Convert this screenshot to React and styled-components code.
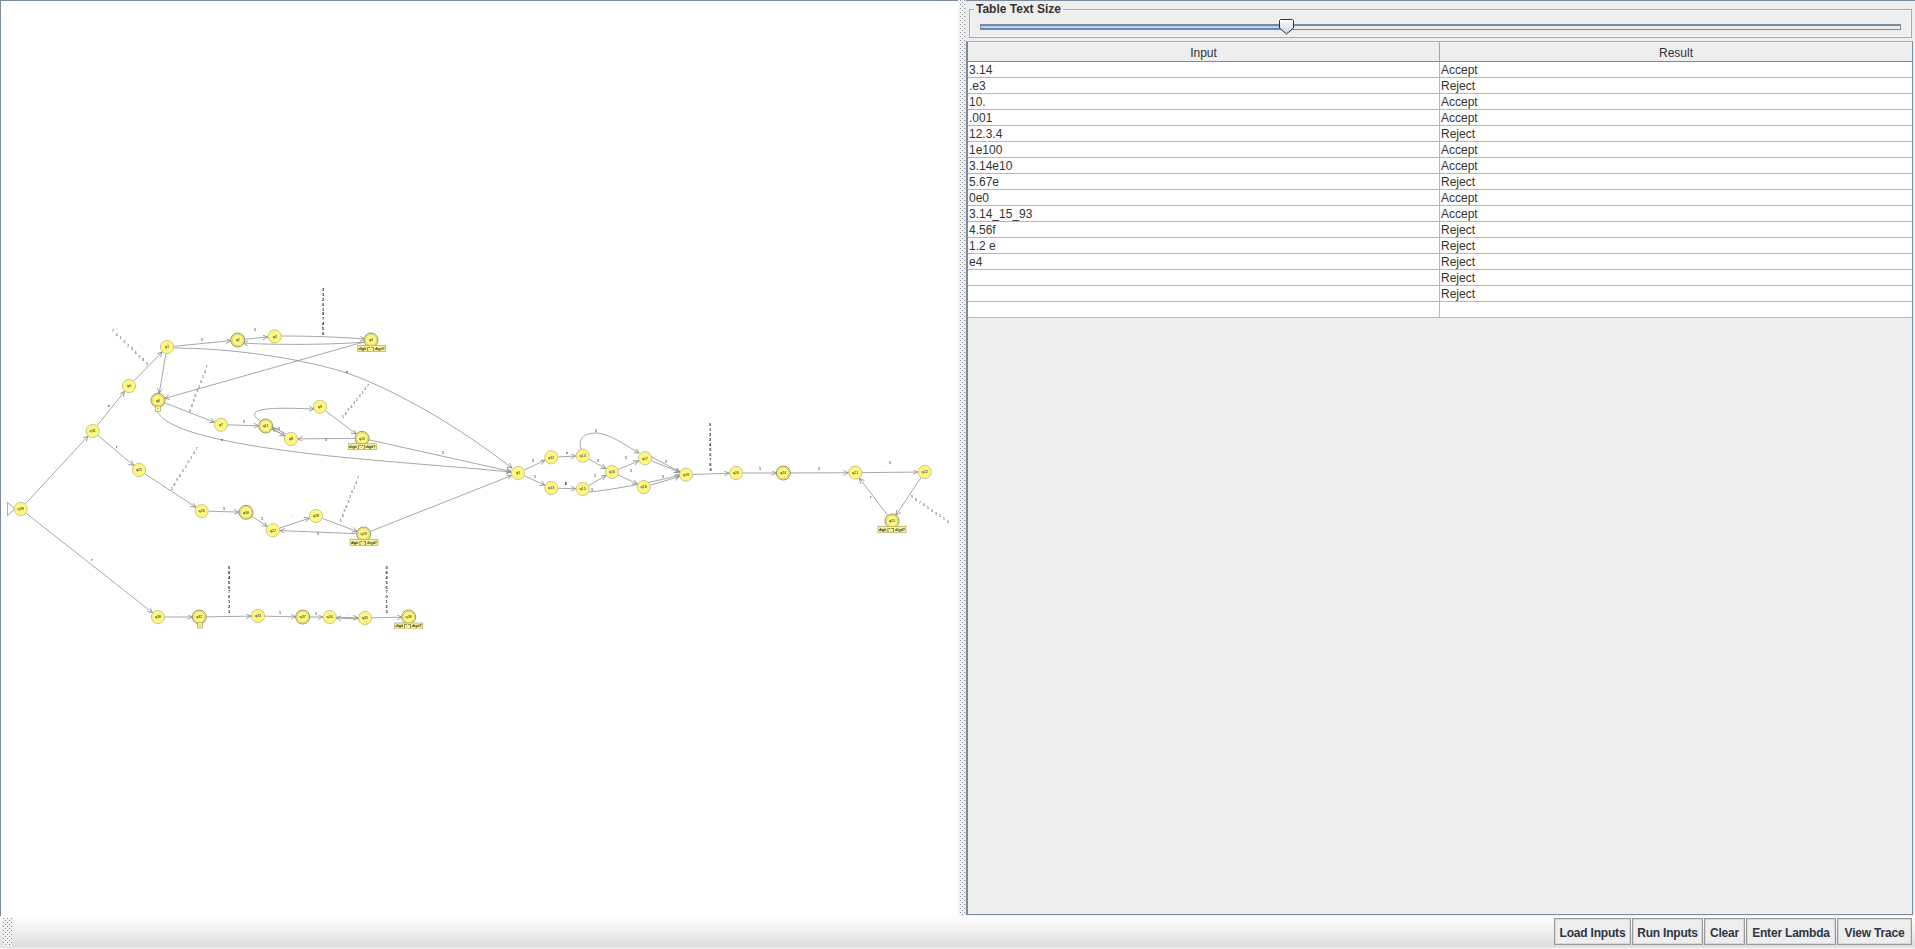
import React from 'react';
import styled, { createGlobalStyle } from 'styled-components';

const GlobalStyle = createGlobalStyle`
	html, body {
		margin: 0;
		height: 100%;
		overflow: hidden;
		background: #eeeeee;
		font-family: 'Liberation Sans', Arial, sans-serif;
	}
`;

const nodes = {
	q0: [129, 386], q1: [167, 347], q2: [237.7, 340, 1], q3: [274.7, 336.3], q4: [371, 340, 1],
	q5: [518, 473], q6: [158, 400.3, 1], q7: [221, 424.7], q8: [291, 439], q9: [320, 406.7],
	q10: [362, 438.3, 1], q11: [265.7, 426, 1], q12: [551.3, 457.3], q13: [551.3, 488],
	q14: [582.7, 455.7], q15: [582.7, 489], q16: [612, 472], q17: [645, 458.3], q18: [643.7, 487],
	q19: [686, 474.7], q20: [736, 473], q21: [855.3, 472.7], q22: [924.7, 472], q23: [892, 521, 1],
	q24: [783.3, 473, 1], q25: [139, 470], q26: [201.7, 511], q27: [273, 530.3], q28: [316, 516],
	q29: [363.7, 534, 1], q30: [246, 512.3, 1], q31: [92.7, 431], q32: [199.3, 617, 1], q33: [258, 616],
	q34: [329.7, 617], q35: [365, 618], q36: [408.7, 617, 1], q37: [302.7, 617, 1], q38: [158, 617],
	q39: [20.7, 509],
};

const edges = [
	['q39', 'q31'], ['q31', 'q0'], ['q0', 'q1'], ['q1', 'q2'], ['q2', 'q3'], ['q1', 'q6'],
	['q4', 'q6'], ['q6', 'q7'], ['q7', 'q11'], ['q11', 'q8'], ['q9', 'q10'], ['q10', 'q8'],
	['q10', 'q5'], ['q31', 'q25'], ['q25', 'q26'], ['q26', 'q30'], ['q30', 'q27'], ['q27', 'q28'],
	['q28', 'q29'], ['q29', 'q27'], ['q29', 'q5'], ['q39', 'q38'], ['q38', 'q32'], ['q32', 'q33'],
	['q33', 'q37'], ['q37', 'q34'], ['q34', 'q35'], ['q35', 'q36'], ['q5', 'q12'], ['q5', 'q13'],
	['q12', 'q14'], ['q13', 'q15'], ['q14', 'q16'], ['q15', 'q16'], ['q16', 'q17'], ['q16', 'q18'],
	['q17', 'q19'], ['q18', 'q19'], ['q19', 'q20'], ['q20', 'q24'], ['q24', 'q21'], ['q21', 'q22'],
	['q22', 'q23'], ['q23', 'q21'],
];

const curves = [
	'M173 348 C230 348 300 358 347 373 C400 392 460 428 512 468',
	'M156 407 C158 432 240 446 330 456 C400 463 460 467 511 472',
	'M286 434 C270 425 252 420 255 413 C258 407 290 408 314 409',
	'M581 449 C578 437 585 433 597 433 C610 434 625 445 639 453',
	'M589 492 C610 490 650 483 680 475',
	'M281 336 C310 336 340 337 365 339',
	'M365 342 C330 345 270 345 243 343',
	'M285 436 L272 428',
	'M359 619 L336 618',
	'M648 455 L680 472',
];

const edgeLabels = [
	[55, 468, '.'], [109, 407, 'e'], [146, 366, '_'], [202, 341, '1'], [255, 331, '1'], [240, 347, '.'],
	[167, 374, '.'], [266, 374, '.'], [347, 373, 'e'], [190, 411, '_'], [244, 423, '1'], [279, 430, '1'],
	[302, 418, '.'], [326, 441, '1'], [222, 441, 'e'], [117, 448, 'r'], [172, 489, '_'], [224, 510, '1'],
	[262, 520, '1'], [293, 516, '.'], [318, 535, '1'], [92, 561, 'r'], [178, 614, '.'], [280, 614, '1'],
	[316, 615, '1'], [348, 615, '.'], [533, 462, '1'], [535, 478, '1'], [567, 454, 'e'], [566, 485, 'E'],
	[598, 462, '1'], [595, 477, '1'], [592, 491, '1'], [596, 432, '1'], [626, 459, '1'], [631, 472, '1'],
	[666, 463, '1'], [663, 478, '1'], [760, 470, '1'], [819, 470, '1'], [890, 464, '1'], [871, 498, 'r'],
	[443, 454, '1'], [440, 500, '.'],
];

// little stacks of digit labels hanging off the looping transitions
const digitStacks = [
	{ from: [323, 291], to: [323, 335], chars: '3320187456', dark: true },
	{ from: [113, 332], to: [147, 365], chars: '7410236985' },
	{ from: [206.7, 368], to: [190, 412], chars: '7410236985' },
	{ from: [368, 387], to: [343, 418], chars: '7410236985' },
	{ from: [196.7, 450], to: [171.7, 490], chars: '7410236985' },
	{ from: [358, 479], to: [340.7, 522], chars: '7410236985' },
	{ from: [229, 569], to: [229, 613], chars: '9845670123', dark: true },
	{ from: [386.7, 569], to: [386.7, 613], chars: '9845670123', dark: true },
	{ from: [710, 426], to: [710.5, 471], chars: '0123456789', dark: true },
	{ from: [912, 498], to: [948, 523], chars: '9876543210' },
];

const acceptLabels = [[371.7, 348.3], [362.3, 446.7], [364, 542.3], [408.7, 626], [892, 529.3]];
const dotLabels = [[158, 408.7], [200, 625.3]];

const rows = [
	['3.14', 'Accept'], ['.e3', 'Reject'], ['10.', 'Accept'], ['.001', 'Accept'], ['12.3.4', 'Reject'],
	['1e100', 'Accept'], ['3.14e10', 'Accept'], ['5.67e', 'Reject'], ['0e0', 'Accept'],
	['3.14_15_93', 'Accept'], ['4.56f', 'Reject'], ['1.2 e', 'Reject'], ['e4', 'Reject'],
	['', 'Reject'], ['', 'Reject'], ['', ''],
];

const buttons = [
	{ label: 'Load Inputs', width: 77 },
	{ label: 'Run Inputs', width: 71 },
	{ label: 'Clear', width: 41 },
	{ label: 'Enter Lambda', width: 90 },
	{ label: 'View Trace', width: 75 },
];

function trimLine(a, b, r = 7) {
	const dx = b[0] - a[0];
	const dy = b[1] - a[1];
	const len = Math.hypot(dx, dy);
	const ux = dx / len;
	const uy = dy / len;
	return { x1: a[0] + ux * r, y1: a[1] + uy * r, x2: b[0] - ux * r, y2: b[1] - uy * r };
}

function Graph() {
	return (
		<GraphSvg width="958" height="916" viewBox="0 0 958 916">
			<defs>
				<marker id="arrow" markerWidth="6" markerHeight="6" refX="5" refY="2.5" orient="auto" markerUnits="userSpaceOnUse">
					<path d="M0 0 L5 2.5 L0 5" fill="none" stroke="#808080" strokeWidth="0.7" />
				</marker>
				<filter id="soft" x="0" y="0" width="100%" height="100%">
					<feGaussianBlur stdDeviation="0.22" />
				</filter>
			</defs>
			<g filter="url(#soft)">
				<path d="M7.3 502.3 L15 509 L7.3 515.7 Z" fill="#fff" stroke="#888" strokeWidth="0.8" />
				{edges.map(([a, b]) => (
					<line key={a + b} {...trimLine(nodes[a], nodes[b])} stroke="#909090" strokeWidth="0.8" markerEnd="url(#arrow)" />
				))}
				{curves.map(d => (
					<path key={d} d={d} fill="none" stroke="#909090" strokeWidth="0.8" markerEnd="url(#arrow)" />
				))}
				{edgeLabels.map(([x, y, t], i) => (
					<text key={i} x={x} y={y} fontSize="3.6" fontWeight="bold" fill="#333" textAnchor="middle">{t}</text>
				))}
				{digitStacks.map((stack, s) =>
					stack.chars.split('').map((c, i) => {
						const t = i / (stack.chars.length - 1);
						const x = stack.from[0] + (stack.to[0] - stack.from[0]) * t;
						const y = stack.from[1] + (stack.to[1] - stack.from[1]) * t;
						return (
							<text
								key={s + '-' + i}
								x={x}
								y={y}
								fontSize={stack.dark ? 4 : 3.4}
								fontWeight={stack.dark ? 'bold' : 'normal'}
								fill={stack.dark ? '#222' : '#333'}
								textAnchor="middle"
							>
								{c}
							</text>
						);
					})
				)}
				{Object.entries(nodes).map(([name, [x, y, final]]) => (
					<g key={name}>
						<circle cx={x} cy={y} r={final ? 7 : 6.6} fill="#fdf780" stroke={final ? '#8f8c50' : '#b5b27a'} strokeWidth={final ? 0.9 : 0.7} />
						{final && <circle cx={x} cy={y} r="5.6" fill="#fdf780" stroke="#b5b27a" strokeWidth="0.5" />}
						<text x={x} y={y + 1.3} fontSize="3.7" fill="#222" textAnchor="middle">{name}</text>
					</g>
				))}
				{acceptLabels.map(([x, y]) => (
					<g key={x}>
						<rect x={x - 14} y={y - 3} width="28" height="6" fill="#fdf79a" stroke="#a8a25c" strokeWidth="0.7" />
						<text x={x} y={y + 1.3} fontSize="3.6" fontWeight="bold" fill="#222" textAnchor="middle">digit [&quot;.&quot;] digit?</text>
					</g>
				))}
				{dotLabels.map(([x, y]) => (
					<g key={x}>
						<rect x={x - 2.6} y={y - 2.7} width="5.2" height="5.4" fill="#fdf79a" stroke="#a8a25c" strokeWidth="0.7" />
						<text x={x} y={y + 0.6} fontSize="4" fontWeight="bold" fill="#222" textAnchor="middle">..</text>
					</g>
				))}
			</g>
		</GraphSvg>
	);
}

function App() {
	return (
		<Page>
			<GlobalStyle />
			<Workspace>
				<GraphPanel>
					<Graph />
				</GraphPanel>
				<SplitHandle />
				<InputPanel>
					<SizeGroup>
						<SizeLegend>Table Text Size</SizeLegend>
						<SliderTrack>
							<SliderFill $width={300} />
							<SliderThumb width="16" height="16" viewBox="0 0 16 16">
								<defs>
									<linearGradient id="thumb" x1="0" y1="0" x2="0" y2="1">
										<stop offset="0" stopColor="#ffffff" />
										<stop offset="1" stopColor="#c4d4e4" />
									</linearGradient>
								</defs>
								<path d="M1.5 .5 H13.5 L14.5 1.5 V9 L7.5 15 L.5 9 V1.5 Z" fill="url(#thumb)" stroke="#333" />
							</SliderThumb>
						</SliderTrack>
					</SizeGroup>
					<TableFrame>
						<DataTable>
							<colgroup>
								<ColInput />
								<col />
							</colgroup>
							<thead>
								<tr>
									<HeadCell>Input</HeadCell>
									<HeadCell>Result</HeadCell>
								</tr>
							</thead>
							<tbody>
								{rows.map(([input, result], i) => (
									<tr key={i}>
										<Cell>{input}</Cell>
										<Cell>{result}</Cell>
									</tr>
								))}
							</tbody>
						</DataTable>
					</TableFrame>
				</InputPanel>
			</Workspace>
			<BottomBar>
				<BarGrip />
				<ButtonRow>
					{buttons.map(b => (
						<ActionButton key={b.label} $width={b.width}>{b.label}</ActionButton>
					))}
				</ButtonRow>
			</BottomBar>
		</Page>
	);
}

export default App;

const dots = `
	background-image:
		radial-gradient(circle at 0.5px 0.5px, #80868c 0.75px, transparent 0.8px),
		radial-gradient(circle at 0.5px 0.5px, #80868c 0.75px, transparent 0.8px);
	background-size: 4px 4px;
	background-position: 0 0, 2px 2px;
`;

const Page = styled.div`
	height: 100vh;
	display: flex;
	flex-direction: column;
`;

const Workspace = styled.div`
	flex: 1;
	min-height: 0;
	display: flex;
`;

const GraphPanel = styled.div`
	width: 958px;
	background: #ffffff;
	box-shadow: inset 1px 1px 0 #7a8a99;
	overflow: hidden;
`;

const GraphSvg = styled.svg`
	display: block;
`;

const SplitHandle = styled.div`
	width: 5px;
	padding: 0;
	border-left: 2px solid #f4f4f4;
	border-right: 1px solid #eeeeee;
	background-color: #f4f4f4;
	${dots}
`;

const InputPanel = styled.div`
	flex: 1;
	min-width: 0;
	display: flex;
	flex-direction: column;
	background: #eeeeee;
	box-shadow: inset 0 1px 0 #7a8a99;
`;

const SizeGroup = styled.fieldset`
	box-sizing: border-box;
	height: 36px;
	margin: 2px 3px 3px 3px;
	padding: 3px 10px 0 10px;
	border: 1px solid #a9a9a9;
	box-shadow: inset 0 0 0 1px #f6f6f6;
`;

const SizeLegend = styled.legend`
	margin-left: -6px;
	padding: 0 2px;
	font-size: 12px;
	font-weight: bold;
	line-height: 14px;
	color: #333333;
`;

const SliderTrack = styled.div`
	position: relative;
	height: 6px;
	margin-top: 5px;
	border: 1px solid #7a8a99;
	border-top-width: 2px;
	background: #eeeeee;
	box-sizing: border-box;
`;

const SliderFill = styled.div`
	box-sizing: border-box;
	width: ${p => p.$width}px;
	height: 100%;
	border-bottom: 1px solid #6382bf;
	background: linear-gradient(#a9c2e6, #d3e0f0);
`;

const SliderThumb = styled.svg`
	position: absolute;
	left: 298px;
	top: -7px;
`;

const TableFrame = styled.div`
	flex: 1;
	min-height: 0;
	margin: 0 2px 1px 0;
	border: 1px solid #7a8a99;
	border-top-color: #a9b2bb;
	border-left-width: 2px;
	background: #eeeeee;
`;

const DataTable = styled.table`
	width: 100%;
	table-layout: fixed;
	border-collapse: separate;
	border-spacing: 0;
	font-size: 12px;
	color: #333333;
`;

const ColInput = styled.col`
	width: 472px;
`;

const HeadCell = styled.th`
	box-sizing: border-box;
	height: 20px;
	padding: 2px 0 0 0;
	font-weight: normal;
	text-align: center;
	background: #eeeeee;
	border-bottom: 1px solid #7a8a99;
	&:first-child {
		border-right: 1px solid #a0a7ae;
	}
`;

const Cell = styled.td`
	box-sizing: border-box;
	height: 16px;
	padding: 1px 0 0 1px;
	line-height: 14px;
	white-space: nowrap;
	overflow: hidden;
	background: #ffffff;
	border-bottom: 1px solid #b8b8b8;
	&:first-child {
		border-right: 1px solid #b8b8b8;
	}
`;

const BottomBar = styled.div`
	flex: none;
	box-sizing: border-box;
	height: 33px;
	padding: 2px 3px 2px 3px;
	display: flex;
	align-items: flex-start;
	justify-content: space-between;
	background: linear-gradient(#ffffff, #dedede);
	border-bottom: 2px solid #ececec;
`;

const BarGrip = styled.div`
	width: 9px;
	height: 28px;
	background-color: #f2f2f2;
	${dots}
`;

const ButtonRow = styled.div`
	display: flex;
	gap: 1px;
`;

const ActionButton = styled.button`
	box-sizing: border-box;
	width: ${p => p.$width}px;
	height: 27px;
	padding: 2px 0 0 0;
	font-family: 'Liberation Sans', Arial, sans-serif;
	font-size: 12px;
	font-weight: bold;
	letter-spacing: -0.2px;
	color: #2f3542;
	background: #eeeeee;
	border: 1px solid #9a9a9a;
	box-shadow: inset 0 0 0 1px #d8d8d8;
	border-radius: 0;
`;
